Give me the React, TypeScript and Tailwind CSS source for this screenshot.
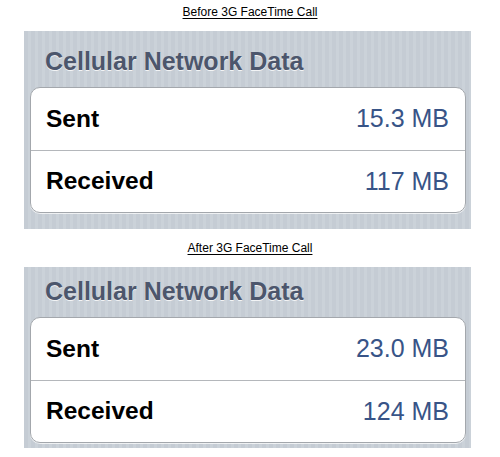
import React from 'react';

// one grouped table from the Settings > Usage screen
type Row = { label: string; value: string };

const before: Row[] = [
  { label: 'Sent', value: '15.3 MB' },
  { label: 'Received', value: '117 MB' },
];

const after: Row[] = [
  { label: 'Sent', value: '23.0 MB' },
  { label: 'Received', value: '124 MB' },
];

function Caption({ text, className }: { text: string; className: string }) {
  return (
    <div className={`flex items-center justify-center ${className}`}>
      <span className="text-[12px] leading-none text-black underline underline-offset-2">{text}</span>
    </div>
  );
}

function Panel({ rows, pt, pb }: { rows: Row[]; pt: string; pb: string }) {
  return (
    <div
      className={`ml-[24px] mr-[29px] bg-[repeating-linear-gradient(90deg,#c5ccd4_0px,#c5ccd4_4px,#cbd2d9_4px,#cbd2d9_7px)] pl-[6px] pr-[5px] ${pt} ${pb}`}
    >
      <div className="pl-[15px] text-[25px] font-bold leading-none text-[#4c566c] [text-shadow:0_1px_0_rgba(255,255,255,0.8)]">
        Cellular Network Data
      </div>
      <div className="mt-[13px] overflow-hidden rounded-[10px] border border-[#a3a7ac] bg-white shadow-[0_1px_0_rgba(255,255,255,0.7)]">
        {rows.map((row, i) => (
          <div
            key={row.label}
            className={`flex h-[62px] items-center justify-between pl-[15px] pr-[16px] ${i > 0 ? 'border-t border-[#b4b7bb]' : ''}`}
          >
            <span className="text-[24.5px] font-bold text-black">{row.label}</span>
            <span className="text-[25px] text-[#385487]">{row.value}</span>
          </div>
        ))}
      </div>
    </div>
  );
}

export default function App() {
  return (
    <div className="h-[457px] w-[500px] bg-white font-['Liberation_Sans',Arial,sans-serif]">
      <Caption text="Before 3G FaceTime Call" className="h-[31px] pb-[7px]" />
      <Panel rows={before} pt="pt-[18px]" pb="pb-[16px]" />
      <Caption text="After 3G FaceTime Call" className="h-[38px]" />
      <Panel rows={after} pt="pt-[12px]" pb="pb-[5px]" />
    </div>
  );
}
